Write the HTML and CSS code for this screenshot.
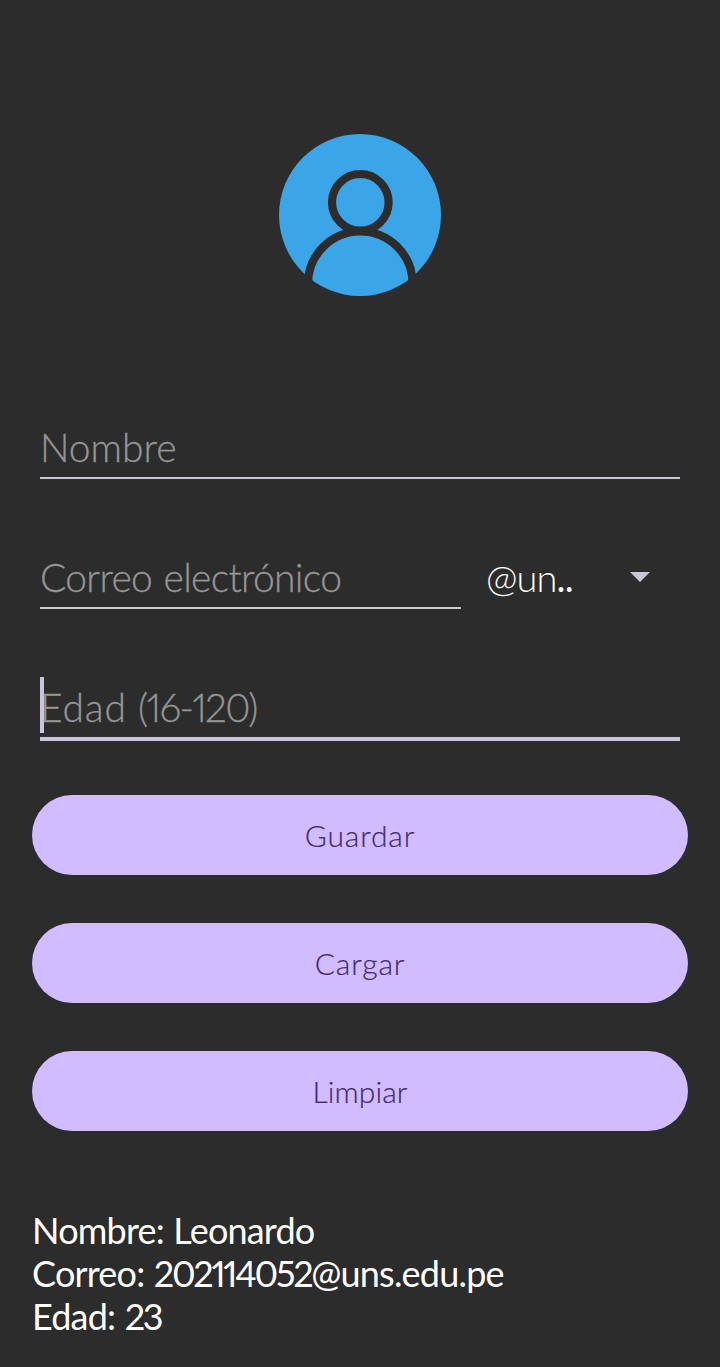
FILE: index.html
```html
<!DOCTYPE html>
<html lang="es">
<head>
<meta charset="utf-8">
<title>Registro</title>
<link rel="stylesheet" href="styles.css">
</head>
<body>
<main class="screen">
  <svg class="avatar" viewBox="0 0 162 162" aria-hidden="true">
    <defs><clipPath id="disc"><circle cx="81" cy="81" r="82"/></clipPath></defs>
    <circle class="avatar-disc" cx="81" cy="81" r="81"/>
    <g class="avatar-lines" clip-path="url(#disc)">
      <circle cx="81.3" cy="68.3" r="28.3"/>
      <path d="M29 165 V150 C29 120 53 97.5 81.3 97.5 S133.6 120 133.6 150 V165"/>
    </g>
  </svg>
  <form class="form">
    <div class="field"><span class="hint name">Nombre</span></div>
    <div class="row">
      <div class="field"><span class="hint mail">Correo electrónico</span></div>
      <div class="select"><span class="domain">@un<b class="dots">..</b></span><i class="arrow"></i></div>
    </div>
    <div class="field focused"><i class="caret"></i><span class="hint age">Edad <span class="range">(16-120)</span></span></div>
    <button class="button save" type="button">Guardar</button>
    <button class="button load" type="button">Cargar</button>
    <button class="button clear" type="button">Limpiar</button>
  </form>
  <section class="result">
    <div>Nombre: Leonardo</div>
    <div>Correo: <span class="digits">202114052</span>@uns.edu.pe</div>
    <div>Edad: <span class="digits">23</span></div>
  </section>
</main>
</body>
</html>
```
FILE: styles.css
```css
* { box-sizing: border-box; }
body { margin: 0; background: #2c2c2c; font-family: Lato, sans-serif; font-weight: 300; }
.screen { height: 1367px; padding: 134px 32px 0; overflow: hidden; }
.avatar { display: block; width: 162px; height: 162px; margin: 0 auto; }
.avatar-disc { fill: #3aa6e7; }
.avatar-lines { fill: none; stroke: #2c2c2c; stroke-width: 8.2; }
.form { display: flex; flex-direction: column; padding-top: 113px; }
.field { position: relative; height: 70px; margin: 0 8px; border-bottom: 2px solid #c9c5d0; font-size: 39px; line-height: 76px; white-space: nowrap; }
.hint { color: #959595; -webkit-text-stroke: 0.3px #959595; }
.mail { letter-spacing: -0.7px; word-spacing: 1.5px; }
.age { letter-spacing: 0.8px; }
.range { letter-spacing: -1.7px; font-feature-settings: "pnum"; }
.row { display: flex; margin-top: 60px; }
.row .field { width: 421px; border-color: #cacaca; }
.select { display: flex; flex: 1; align-items: center; justify-content: space-between; padding: 0 38px 0 17px; height: 70px; }
.domain { color: #fff; font-size: 38px; line-height: 76px; height: 70px; letter-spacing: -0.9px; }
.dots { font-weight: 400; }
.arrow { border: 10px solid transparent; border-top-color: #cac6d2; border-bottom: 0; margin-top: 6px; }
.focused { height: 72px; margin-top: 60px; border-bottom: 4px solid #cbc2dc; }
.caret { position: absolute; left: 0; top: 8px; width: 4px; height: 56px; background: #cbc2dc; }
.button { height: 80px; padding: 0; border: 0; border-radius: 40px; background: #d0bcff; color: #432978; font: 300 30px Lato, sans-serif; letter-spacing: 0.9px; margin-top: 48px; -webkit-text-stroke: 0.2px #432978; }
.clear { letter-spacing: 0.1px; }
.save { margin-top: 54px; }
.result { padding: 78px 0 0; color: #fff; font-size: 36px; font-weight: 400; line-height: 43px; letter-spacing: -0.8px; word-spacing: 1px; white-space: nowrap; }
.digits { letter-spacing: -2.3px; font-feature-settings: "pnum"; }
```
